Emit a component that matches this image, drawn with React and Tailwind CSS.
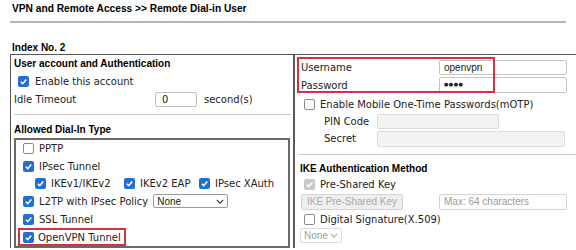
import React from 'react'

function Check({ checked, disabled }) {
  if (checked) {
    return (
      <span
        className={`inline-flex h-[11px] w-[11px] shrink-0 items-center justify-center rounded-[2px] ${
          disabled ? 'bg-[#c9c9c9]' : 'bg-[#1f6fd6]'
        }`}
      >
        <svg viewBox="0 0 10 10" className="h-[9px] w-[9px]">
          <path d="M2 5.3 L4.1 7.4 L8.1 2.7" fill="none" stroke="white" strokeWidth="1.8" />
        </svg>
      </span>
    )
  }
  return <span className="inline-block h-[11px] w-[11px] shrink-0 rounded-[2px] border border-[#8a8a8a] bg-white" />
}

// rows always get their height from the caller
function Row({ children, className = '' }) {
  return <div className={`flex items-center ${className}`}>{children}</div>
}

function Chevron({ color = '#333' }) {
  return (
    <svg viewBox="0 0 10 6" className="h-[5px] w-[8px]">
      <path d="M1 1 L5 5 L9 1" fill="none" stroke={color} strokeWidth="1.4" />
    </svg>
  )
}

export default function App() {
  const head = "font-['Liberation_Sans',Arial,sans-serif] font-bold text-[10px] text-black"

  return (
    <div className="h-[250px] w-[576px] overflow-hidden bg-white font-['DejaVu_Sans',Verdana,sans-serif] text-[10px] text-[#222]">
      <div className="ml-[10px] mr-[10px] h-[23px] border-b-2 border-[#b5b5b5] pl-[2px] pt-[2px]">
        <div className="font-['Liberation_Sans',Arial,sans-serif] text-[10.2px] font-bold leading-[14px] text-black">
          VPN and Remote Access &gt;&gt; Remote Dial-in User
        </div>
      </div>

      <div className={`ml-[12px] mt-[18px] h-[13px] leading-[13px] ${head}`}>Index No. 2</div>

      <div className="ml-[10px] flex w-[580px] border-l border-t border-[#555]">
        {/* left column */}
        <div className="w-[282px] shrink-0 pl-[3px] pr-[2px]">
          <Row className={`h-[17px] ${head}`}>User account and Authentication</Row>
          <Row className="h-[18px] gap-[6px] pl-[4px]">
            <Check checked />
            <span>Enable this account</span>
          </Row>
          <Row className="h-[18px]">
            <span className="w-[141px]">Idle Timeout</span>
            <span className="flex h-[15px] w-[42px] items-center rounded-[2px] border border-[#bdbdbd] pl-[6px]">0</span>
            <span className="ml-[7px]">second(s)</span>
          </Row>
          <div className="mt-[6px] border-t border-[#c4c4c4]" />
          <Row className={`mt-[6px] h-[16px] ${head}`}>Allowed Dial-In Type</Row>
          <div className="mr-[1px] mt-[1px] border-2 border-[#6a6a6a] pl-[7px]">
            <Row className="h-[17px] gap-[5px]">
              <Check />
              <span>PPTP</span>
            </Row>
            <Row className="h-[18px] gap-[5px]">
              <Check checked />
              <span>IPsec Tunnel</span>
            </Row>
            <Row className="h-[17px] pl-[12px]">
              <Check checked />
              <span className="ml-[5px] w-[73px]">IKEv1/IKEv2</span>
              <Check checked />
              <span className="ml-[5px] w-[59px]">IKEv2 EAP</span>
              <Check checked />
              <span className="ml-[5px]">IPsec XAuth</span>
            </Row>
            <Row className="h-[18px] gap-[5px]">
              <Check checked />
              <span>L2TP with IPsec Policy</span>
              <span className="flex h-[14px] w-[75px] items-center justify-between rounded-[2px] border border-[#9a9a9a] px-[3px] font-['Liberation_Sans',Arial,sans-serif]">
                None
                <Chevron />
              </span>
            </Row>
            <Row className="h-[18px] gap-[5px]">
              <Check checked />
              <span>SSL Tunnel</span>
            </Row>
            <Row className="h-[18px]">
              <span className="-ml-[5px] flex h-[18px] items-center gap-[4px] border-2 border-[#d2333e] pl-[3px] pr-[3px]">
                <Check checked />
                <span>OpenVPN Tunnel</span>
              </span>
            </Row>
          </div>
        </div>

        {/* right column */}
        <div className="relative w-[298px] shrink-0 border-l-2 border-[#5a5a5a] pl-[3px]">
          <div className="pointer-events-none absolute left-[2px] top-[2px] h-[36px] w-[198px] border-2 border-[#d2333e]" />
          <div className="pt-[4px]">
            <Row className="h-[17px]">
              <span className="w-[141px] pl-[3px]">Username</span>
              <span className="flex h-[15px] w-[128px] items-center rounded-[2px] border border-[#c4c4c4] pl-[4px] font-['Liberation_Sans',Arial,sans-serif]">
                openvpn
              </span>
            </Row>
            <Row className="h-[18px]">
              <span className="w-[141px] pl-[3px]">Password</span>
              <span className="flex h-[16px] w-[128px] items-center rounded-[2px] border border-[#c4c4c4] pl-[4px] text-[5px] tracking-[0.5px]">
                ●●●●
              </span>
            </Row>
          </div>
          <Row className="mt-[1px] h-[18px] gap-[5px] pl-[6px]">
            <Check />
            <span>Enable Mobile One-Time Passwords(mOTP)</span>
          </Row>
          <Row className="h-[17px] pl-[26px]">
            <span className="w-[53px]">PIN Code</span>
            <span className="h-[15px] w-[122px] rounded-[2px] border border-[#dcdcdc] bg-[#f3f3f3]" />
          </Row>
          <Row className="h-[17px] pl-[26px]">
            <span className="w-[53px]">Secret</span>
            <span className="h-[16px] w-[188px] rounded-[2px] border border-[#dcdcdc] bg-[#f3f3f3]" />
          </Row>
          <div className="ml-[1px] mr-[7px] mt-[7px] border-t border-[#c4c4c4]" />
          <Row className={`mt-[6px] h-[14px] pl-[2px] ${head}`}>IKE Authentication Method</Row>
          <Row className="mt-[1px] h-[17px] gap-[5px] pl-[6px]">
            <Check checked disabled />
            <span>Pre-Shared Key</span>
          </Row>
          <Row className="h-[17px] pl-[3px]">
            <span className="flex h-[16px] w-[102px] items-center justify-center rounded-[2px] border border-[#d4d4d4] bg-[#efefef] font-['Liberation_Sans',Arial,sans-serif] text-[#a9a9a9]">
              IKE Pre-Shared Key
            </span>
            <span className="ml-[36px] flex h-[16px] w-[128px] items-center rounded-[2px] border border-[#d4d4d4] pl-[4px] font-['Liberation_Sans',Arial,sans-serif] text-[#9a9a9a]">
              Max: 64 characters
            </span>
          </Row>
          <Row className="h-[18px] gap-[5px] pl-[6px]">
            <Check />
            <span>Digital Signature(X.509)</span>
          </Row>
          <Row className="h-[15px] pl-[2px]">
            <span className="flex h-[15px] w-[42px] items-center justify-between rounded-[2px] border border-[#dcdcdc] px-[3px] font-['Liberation_Sans',Arial,sans-serif] text-[#a0a0a0]">
              None
              <Chevron color="#aaa" />
            </span>
          </Row>
        </div>
      </div>
    </div>
  )
}
